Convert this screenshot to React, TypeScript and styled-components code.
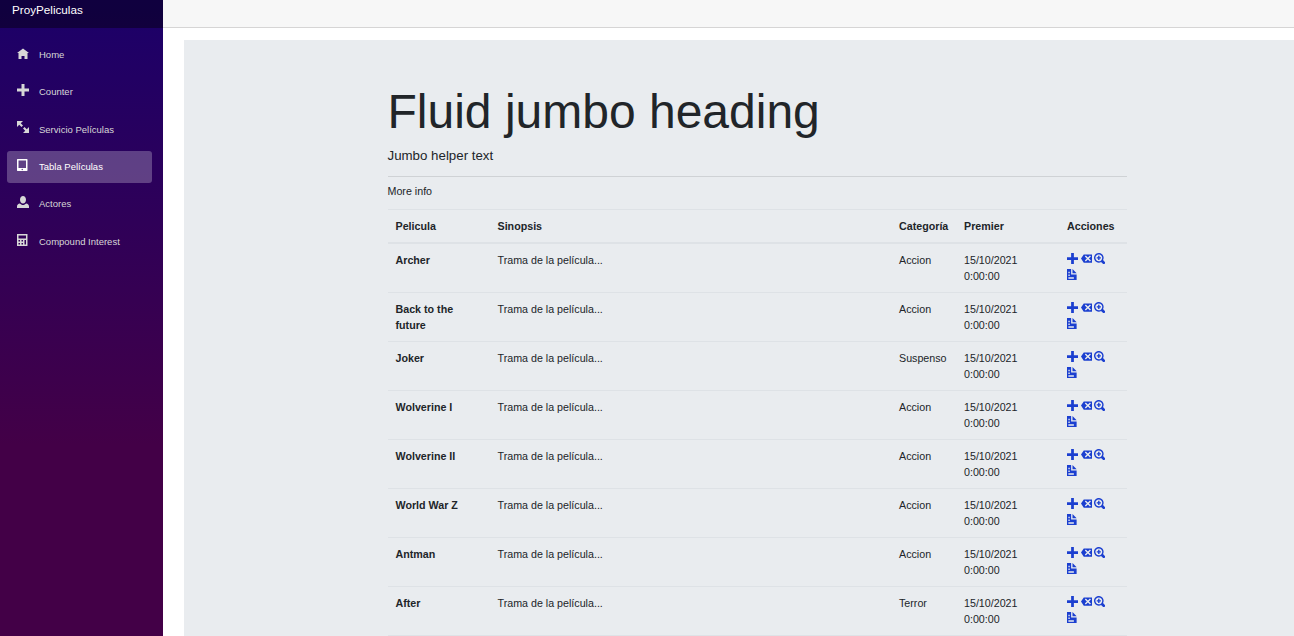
import React from "react";
import styled, { createGlobalStyle } from "styled-components";

const Global = createGlobalStyle`
  html, body { margin: 0; padding: 0; height: 636px; overflow: hidden; background: #fff; }
  body { font-family: "Liberation Sans", Arial, sans-serif; color: #212529; }
`;
const Page = styled.div`display: flex; height: 636px; overflow: hidden;`;
const Sidebar = styled.aside`
  width: 163px; flex: none; display: flex; flex-direction: column;
  background-image: linear-gradient(180deg, #1b0069 0%, #430047 70%);
`;
const Brand = styled.div`
  height: 28px; flex: none; background: rgba(0,0,0,.4); color: #fff;
  font-size: 11.7px; line-height: 20px; padding-left: 12px;
`;
const Nav = styled.nav`display: flex; flex-direction: column; padding: 10.4px 11px 0 7px;`;
const NavItem = styled.div<{ $active?: boolean }>`
  height: 32px; margin-bottom: 5.4px; border-radius: 3px; display: flex; align-items: center;
  padding-left: 10px; font-size: 9.5px; color: ${p => (p.$active ? "#fff" : "#d7d7d7")};
  background: ${p => (p.$active ? "rgba(255,255,255,.25)" : "transparent")};
`;
const NavIcon = styled.svg`width: 12px; height: 12px; margin: -3.5px 10px 0 0; fill: currentColor; flex: none;`;
const Main = styled.main`flex: 1; min-width: 0; display: flex; flex-direction: column;`;
const TopBar = styled.div`height: 27px; flex: none; background: #f7f7f7; border-bottom: 1px solid #d6d5d5;`;
const Body = styled.div`flex: 1; padding: 12px 0 0 21px; min-height: 0;`;
const Jumbotron = styled.section`background: #e9ecef; height: 100%; padding: 41px 0 0 203.5px; box-sizing: border-box;`;
const Inner = styled.div`width: 739.5px;`;
const Heading = styled.h1`margin: 0; font-size: 48px; font-weight: 400; line-height: 62px; color: #212529;`;
const Lead = styled.p`margin: 3px 0 0; font-size: 13.3px; line-height: 20px; color: #212529;`;
const Rule = styled.hr`margin: 10px 0 0; border: 0; border-top: 1px solid #cfd2d5;`;
const More = styled.p`margin: 0; font-size: 10.7px; line-height: 28px; height: 32px; color: #212529;`;
const Table = styled.table`
  width: 739.5px; table-layout: fixed; border-collapse: collapse; font-size: 10.7px; line-height: 16px; color: #212529;
`;
const Th = styled.th<{ $w: number }>`
  width: ${p => p.$w}px; box-sizing: border-box; text-align: left; font-weight: 700; vertical-align: bottom;
  padding: 8px; border-top: 1px solid #dee2e6; border-bottom: 2px solid #dee2e6;
`;
const Td = styled.td<{ $bold?: boolean }>`
  padding: 8px; vertical-align: top; border-bottom: 1px solid #dee2e6; height: 48px; box-sizing: border-box;
  font-weight: ${p => (p.$bold ? 700 : 400)};
`;
const ActionIcon = styled.svg`
  width: 11px; height: 11px; margin-right: 2.6px; fill: #1b3fd0; display: inline-block; vertical-align: top; margin-top: 1px;
`;
const ActionLine = styled.div`height: 16px; white-space: nowrap;`;

const icons = {
  home: "M4 1l-4 3h1v4h2v-2h2v2h2v-4.03l1 .03-4-3z",
  plus: "M3 0v3h-3v2h3v3h2v-3h3v-2h-3v-3h-2z",
  full: "M0 0v4l1.5-1.5 1.5 1.5 1-1-1.5-1.5 1.5-1.5h-4zm5 4l-1 1 1.5 1.5-1.5 1.5h4v-4l-1.5 1.5-1.5-1.5z",
  tablet: "M.34 0c-.18 0-.34.16-.34.34v7.31c0 .18.16.34.34.34h6.31c.18 0 .34-.16.34-.34v-7.31c0-.18-.16-.34-.34-.34h-6.31zm.66 1h5v5h-5v-5zm2.5 5.5c.28 0 .5.22.5.5s-.22.5-.5.5-.5-.22-.5-.5.22-.5.5-.5z",
  person: "M4 0c-1.1 0-2 1.12-2 2.5s.9 2.5 2 2.5 2-1.12 2-2.5-.9-2.5-2-2.5zm-2.09 5c-1.06.05-1.91.92-1.91 2v1h8v-1c0-1.08-.84-1.95-1.91-2-.54.61-1.28 1-2.09 1-.81 0-1.55-.39-2.09-1z",
  calc: "M.09 0c-.06 0-.09.04-.09.09v7.81c0 .05.04.09.09.09h6.81c.05 0 .09-.04.09-.09v-7.81c0-.06-.04-.09-.09-.09h-6.81zm.91 1h5v2h-5v-2zm0 3h1v1h-1v-1zm2 0h1v1h-1v-1zm2 0h1v3h-1v-3zm-4 2h1v1h-1v-1zm2 0h1v1h-1v-1z",
  del: "M2 1l-2 3 2 3h6v-6h-6zm1.5.78l1.5 1.5 1.5-1.5.72.72-1.5 1.5 1.5 1.5-.72.72-1.5-1.5-1.5 1.5-.72-.72 1.5-1.5-1.5-1.5.72-.72z",
  zoom: "M3.5 0c-1.93 0-3.5 1.57-3.5 3.5s1.57 3.5 3.5 3.5c.59 0 1.17-.14 1.66-.41a1 1 0 0 0 .13.13l1 1a1.02 1.02 0 1 0 1.44-1.44l-1-1a1 1 0 0 0-.16-.13c.27-.49.44-1.06.44-1.66 0-1.93-1.57-3.5-3.5-3.5zm0 1c1.39 0 2.5 1.11 2.5 2.5 0 .66-.24 1.27-.66 1.72-.01.01-.02.02-.03.03a1 1 0 0 0-.13.13c-.44.4-1.04.63-1.69.63-1.39 0-2.5-1.11-2.5-2.5s1.11-2.5 2.5-2.5zm-.5 1v1h-1v1h1v1h1v-1h1v-1h-1v-1h-1z",
  doc: "M0 0v8h7v-4h-4v-4h-3zm4 0v3h3l-3-3zm-3 2h1v1h-1v-1zm0 2h1v1h-1v-1zm0 2h4v1h-4v-1z",
};

const navItems: [string, string][] = [
  [icons.home, "Home"], [icons.plus, "Counter"], [icons.full, "Servicio Películas"],
  [icons.tablet, "Tabla Películas"], [icons.person, "Actores"], [icons.calc, "Compound Interest"],
];
const rows: [string, string][] = [
  ["Archer", "Accion"], ["Back to the future", "Accion"], ["Joker", "Suspenso"], ["Wolverine I", "Accion"],
  ["Wolverine II", "Accion"], ["World War Z", "Accion"], ["Antman", "Accion"], ["After", "Terror"],
];

export default function App() {
  return (
    <Page>
      <Global />
      <Sidebar>
        <Brand>ProyPeliculas</Brand>
        <Nav>
          {navItems.map(([d, label], i) => (
            <NavItem key={label} $active={i === 3}>
              <NavIcon viewBox="0 0 8 8"><path d={d} /></NavIcon>
              {label}
            </NavItem>
          ))}
        </Nav>
      </Sidebar>
      <Main>
        <TopBar />
        <Body>
          <Jumbotron>
            <Inner>
              <Heading>Fluid jumbo heading</Heading>
              <Lead>Jumbo helper text</Lead>
              <Rule />
              <More>More info</More>
              <Table>
                <thead>
                  <tr>
                    <Th $w={102}>Pelicula</Th>
                    <Th $w={401.5}>Sinopsis</Th>
                    <Th $w={65}>Categoría</Th>
                    <Th $w={103}>Premier</Th>
                    <Th $w={68}>Acciones</Th>
                  </tr>
                </thead>
                <tbody>
                  {rows.map(([name, cat]) => (
                    <tr key={name}>
                      <Td $bold>{name}</Td>
                      <Td>Trama de la película...</Td>
                      <Td>{cat}</Td>
                      <Td>15/10/2021<br />0:00:00</Td>
                      <Td>
                        <ActionLine>
                          <ActionIcon viewBox="0 0 8 8"><path d={icons.plus} /></ActionIcon>
                          <ActionIcon viewBox="0 0 8 8"><path d={icons.del} /></ActionIcon>
                          <ActionIcon viewBox="0 0 8 8"><path d={icons.zoom} /></ActionIcon>
                        </ActionLine>
                        <ActionLine>
                          <ActionIcon viewBox="0 0 8 8"><path d={icons.doc} /></ActionIcon>
                        </ActionLine>
                      </Td>
                    </tr>
                  ))}
                </tbody>
              </Table>
            </Inner>
          </Jumbotron>
        </Body>
      </Main>
    </Page>
  );
}
